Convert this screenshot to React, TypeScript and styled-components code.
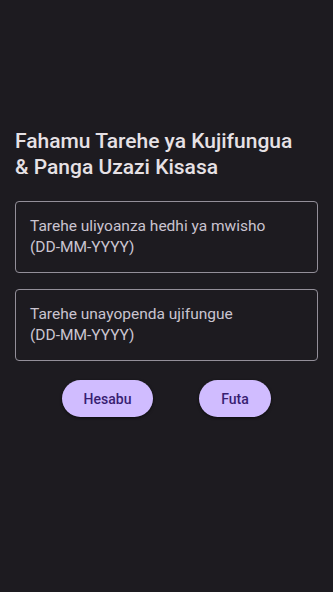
import React from 'react';
import styled, { createGlobalStyle } from 'styled-components';

const GlobalStyle = createGlobalStyle`
  html, body {
    margin: 0;
    padding: 0;
    background: #1d1b20;
  }
  * {
    box-sizing: border-box;
  }
`;

const Screen = styled.div`
  min-height: 592px;
  background: #1d1b20;
  padding: 128px 15px 0;
  font-family: Roboto, "Noto Sans", sans-serif;
  display: flex;
  flex-direction: column;
`;

const Title = styled.h1`
  margin: 0 0 21px;
  font-size: 21px;
  line-height: 26px;
  font-weight: 500;
  color: #e6e1e5;
`;

const Fields = styled.div`
  display: flex;
  flex-direction: column;
  gap: 16px;
`;

const Field = styled.div`
  height: 72px;
  border: 1px solid #938f99;
  border-radius: 4px;
  padding: 14px 14px 0;
  font-size: 15.5px;
  line-height: 21px;
  color: #cac4d0;
`;

const Actions = styled.div`
  display: flex;
  justify-content: center;
  gap: 46px;
  margin-top: 19px;
`;

const Pill = styled.button<{ $width: number }>`
  width: ${({ $width }) => $width}px;
  height: 37px;
  border: none;
  border-radius: 19px;
  background: #d0bcff;
  color: #381e72;
  font-family: Roboto, "Noto Sans", sans-serif;
  font-size: 14px;
  font-weight: 500;
  box-shadow: 0 1px 3px rgba(0, 0, 0, 0.6);
  cursor: pointer;
`;

export default function App() {
  return (
    <>
      <GlobalStyle />
      <Screen>
        <Title>
          Fahamu Tarehe ya Kujifungua
          <br />
          &amp; Panga Uzazi Kisasa
        </Title>
        <Fields>
          <Field>
            Tarehe uliyoanza hedhi ya mwisho
            <br />
            (DD-MM-YYYY)
          </Field>
          <Field>
            Tarehe unayopenda ujifungue
            <br />
            (DD-MM-YYYY)
          </Field>
        </Fields>
        <Actions>
          <Pill $width={91}>Hesabu</Pill>
          <Pill $width={72}>Futa</Pill>
        </Actions>
      </Screen>
    </>
  );
}
